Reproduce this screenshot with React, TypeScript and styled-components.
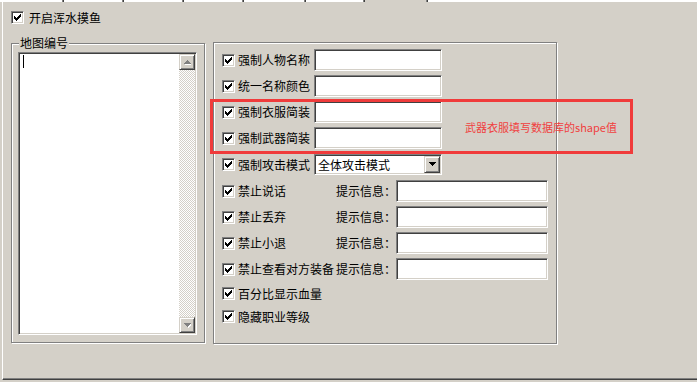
import React from "react";
import styled, { createGlobalStyle } from "styled-components";

const GlobalStyle = createGlobalStyle`
  html, body {
    margin: 0;
    padding: 0;
    background: #d4d0c8;
  }
  body {
    font-family: "Noto Sans CJK SC", "Liberation Sans", sans-serif;
    font-size: 12px;
    color: #000;
  }
`;

const Page = styled.div`
  position: relative;
  width: 697px;
  height: 382px;
  overflow: hidden;
  background: #d4d0c8;
`;

const TabStrip = styled.div`
  display: flex;
  height: 2px;
`;

const TabEdge = styled.div<{ $w?: number; $active?: boolean }>`
  flex: ${p => (p.$w ? `0 0 ${p.$w}px` : "1")};
  height: 2px;
  background: ${p => (p.$active ? "transparent" : "#fff")};
  box-shadow: ${p => (p.$w ? "inset -1px 0 0 #404040, inset -2px 0 0 #808080" : "none")};
`;

const Panel = styled.div`
  box-sizing: border-box;
  margin-left: 2px;
  height: 378px;
  border-left: 1px solid #fff;
  border-bottom: 1px solid #404040;
  box-shadow: inset 0 -1px 0 #808080;
  padding: 9px 0 0 8px;
`;

const Columns = styled.div`
  display: flex;
  align-items: flex-start;
  gap: 8px;
  margin-top: 18px;
`;

const Group = styled.div<{ $w: number; $h: number; $top?: number }>`
  position: relative;
  box-sizing: border-box;
  width: ${p => p.$w}px;
  height: ${p => p.$h}px;
  margin-top: ${p => p.$top || 0}px;
  border: 1px solid #808080;
  box-shadow: inset 1px 1px 0 #fff, 1px 1px 0 #fff;
`;

const Caption = styled.span`
  position: absolute;
  left: 7px;
  top: -9px;
  padding: 0 1px;
  line-height: 16px;
  background: #d4d0c8;
`;

const ListBox = styled.div`
  box-sizing: border-box;
  display: flex;
  width: 179px;
  height: 283px;
  margin: 8px 0 0 6px;
  background: #fff;
  border-style: solid;
  border-width: 1px;
  border-color: #808080 #fff #fff #808080;
  box-shadow: inset 1px 1px 0 #404040, inset -1px -1px 0 #d4d0c8;
  padding: 1px;
`;

const ListArea = styled.div`
  flex: 1;
  padding: 1px 0 0 3px;
`;

const Caret = styled.div`
  width: 1px;
  height: 13px;
  background: #000;
`;

const ScrollBar = styled.div`
  display: flex;
  flex-direction: column;
  justify-content: space-between;
  width: 16px;
  background-color: #fff;
  background-image: repeating-conic-gradient(#d4d0c8 0 25%, #fff 0 50%);
  background-size: 2px 2px;
`;

const RaisedButton = styled.div<{ $h?: number }>`
  box-sizing: border-box;
  display: flex;
  align-items: center;
  justify-content: center;
  width: 16px;
  height: ${p => p.$h || 16}px;
  background: #d4d0c8;
  border-style: solid;
  border-width: 1px;
  border-color: #d4d0c8 #404040 #404040 #d4d0c8;
  box-shadow: inset 1px 1px 0 #fff, inset -1px -1px 0 #808080;
`;

const Rows = styled.div`
  display: flex;
  flex-direction: column;
  gap: 4px;
  padding: 6px 0 0 8px;
`;

const Row = styled.div<{ $h: number }>`
  display: flex;
  align-items: center;
  height: ${p => p.$h}px;
`;

const CheckBox = styled.span`
  box-sizing: border-box;
  flex: none;
  display: flex;
  align-items: center;
  justify-content: center;
  width: 13px;
  height: 13px;
  background: #fff;
  border-style: solid;
  border-width: 1px;
  border-color: #808080 #fff #fff #808080;
  box-shadow: inset 1px 1px 0 #404040, inset -1px -1px 0 #d4d0c8;
`;

const Label = styled.span<{ $w?: number; $gap?: number }>`
  flex: none;
  width: ${p => (p.$w ? `${p.$w}px` : "auto")};
  margin-left: ${p => p.$gap || 3}px;
  white-space: nowrap;
  line-height: 16px;
`;

const Prompt = styled.span`
  flex: none;
  width: 60px;
  white-space: nowrap;
  line-height: 16px;
`;

const Field = styled.div<{ $w: number; $h?: number }>`
  box-sizing: border-box;
  display: flex;
  align-items: center;
  justify-content: space-between;
  width: ${p => p.$w}px;
  height: ${p => p.$h || 22}px;
  background: #fff;
  border-style: solid;
  border-width: 1px;
  border-color: #808080 #fff #fff #808080;
  box-shadow: inset 1px 1px 0 #404040, inset -1px -1px 0 #d4d0c8;
  padding: 1px 1px 1px 3px;
  white-space: nowrap;
`;

const TopRow = styled.div`
  display: flex;
  align-items: center;
  height: 13px;
`;

const Note = styled.div`
  position: absolute;
  left: 210px;
  top: 99px;
  box-sizing: border-box;
  display: flex;
  align-items: center;
  width: 423px;
  height: 55px;
  border: 3px solid #f03b3b;
  padding-left: 252px;
  color: #f04040;
  font-size: 11px;
  white-space: nowrap;
`;

const Check = () => (
  <CheckBox>
    <svg width="7" height="7" viewBox="0 0 7 7" shapeRendering="crispEdges">
      <path
        fill="#000"
        d="M6 0h1v1h-1zM5 1h2v1h-2zM0 2h1v1h-1zM4 2h3v1h-3zM0 3h2v1h-2zM3 3h3v1h-3zM0 4h5v1h-5zM1 5h3v1h-3zM2 6h1v1h-1z"
      />
    </svg>
  </CheckBox>
);

const upPath = "M3 0h1v1h-1zM2 1h3v1h-3zM1 2h5v1h-5zM0 3h7v1h-7z";
const downPath = "M0 0h7v1h-7zM1 1h5v1h-5zM2 2h3v1h-3zM3 3h1v1h-1z";

const Arrow = ({ up, color }: { up?: boolean; color: string }) => (
  <svg width="7" height="5" viewBox="0 0 7 5" shapeRendering="crispEdges">
    {color !== "#000" && <path fill="#fff" transform="translate(1 1)" d={up ? upPath : downPath} />}
    <path fill={color} d={up ? upPath : downPath} />
  </svg>
);

const plainRows = ["强制人物名称", "统一名称颜色", "强制衣服简装", "强制武器简装"];
const promptRows = ["禁止说话", "禁止丢弃", "禁止小退", "禁止查看对方装备"];
const tailRows = ["百分比显示血量", "隐藏职业等级"];
const tabs = [64, 60, 60, 60, 62, 59];

export default function App() {
  return (
    <Page>
      <GlobalStyle />
      <TabStrip>
        {tabs.map((w, i) => (
          <TabEdge key={i} $w={w} />
        ))}
        <TabEdge $w={63} $active />
        <TabEdge />
      </TabStrip>
      <Panel>
        <TopRow>
          <Check />
          <Label $gap={5}>开启浑水摸鱼</Label>
        </TopRow>
        <Columns>
          <Group $w={194} $h={300} $top={1}>
            <Caption>地图编号</Caption>
            <ListBox>
              <ListArea>
                <Caret />
              </ListArea>
              <ScrollBar>
                <RaisedButton>
                  <Arrow up color="#808080" />
                </RaisedButton>
                <RaisedButton>
                  <Arrow color="#808080" />
                </RaisedButton>
              </ScrollBar>
            </ListBox>
          </Group>
          <Group $w={344} $h={302}>
            <Rows>
              {plainRows.map(t => (
                <Row key={t} $h={22}>
                  <Check />
                  <Label $w={76}>{t}</Label>
                  <Field $w={128} />
                </Row>
              ))}
              <Row $h={23}>
                <Check />
                <Label $w={76}>强制攻击模式</Label>
                <Field $w={128} $h={21}>
                  全体攻击模式
                  <RaisedButton $h={17}>
                    <Arrow color="#000" />
                  </RaisedButton>
                </Field>
              </Row>
              {promptRows.map(t => (
                <Row key={t} $h={22}>
                  <Check />
                  <Label $w={98}>{t}</Label>
                  <Prompt>提示信息：</Prompt>
                  <Field $w={152} />
                </Row>
              ))}
              {tailRows.map(t => (
                <Row key={t} $h={19}>
                  <Check />
                  <Label>{t}</Label>
                </Row>
              ))}
            </Rows>
          </Group>
        </Columns>
      </Panel>
      <Note>武器衣服填写数据库的shape值</Note>
    </Page>
  );
}
